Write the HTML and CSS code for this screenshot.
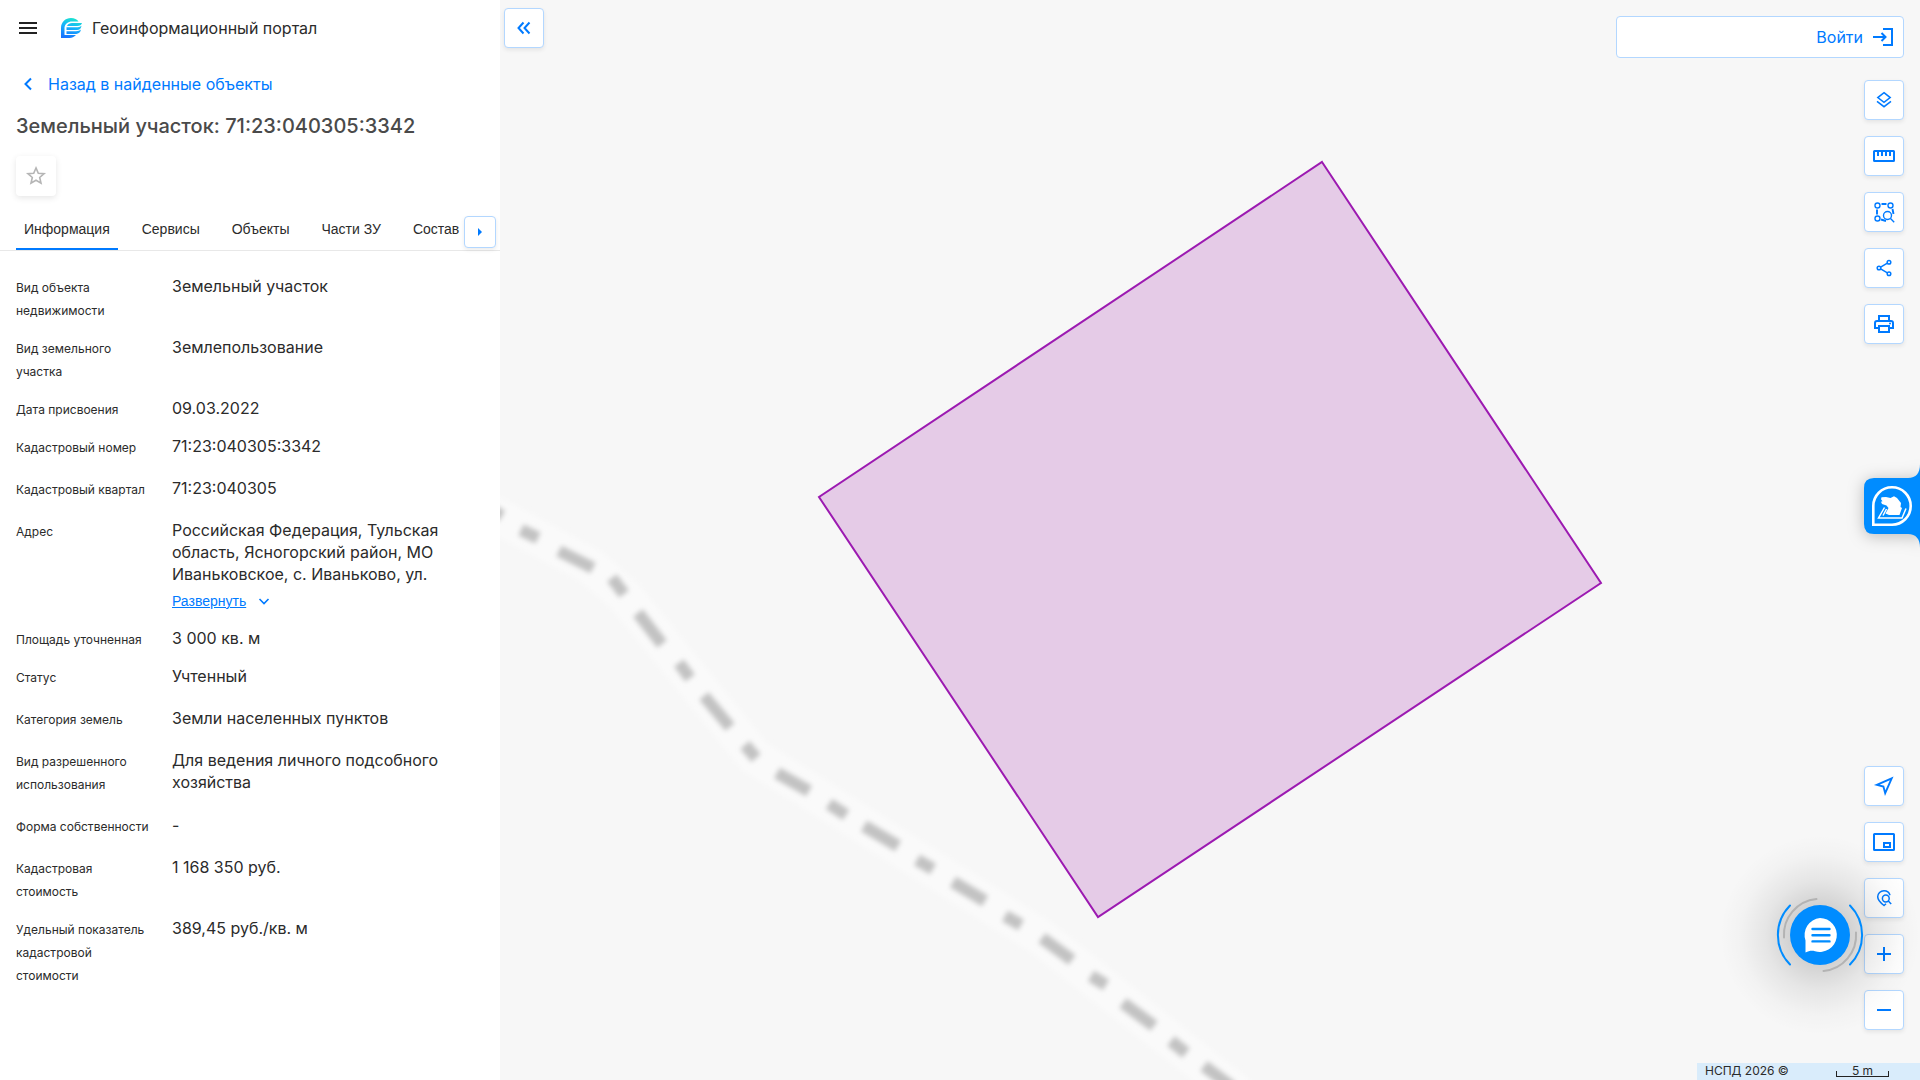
FILE: index.html
```html
<!DOCTYPE html>
<html lang="ru">
<head>
<meta charset="utf-8">
<meta name="viewport" content="width=device-width, initial-scale=1">
<title>Геоинформационный портал</title>
<link rel="stylesheet" href="styles.css">
</head>
<body>
<aside class="panel">
  <header class="topbar">
    <button class="icon-btn" aria-label="Меню">
      <svg width="24" height="24" viewBox="0 0 24 24"><path d="M3 6h18v2H3zM3 11h18v2H3zM3 16h18v2H3z" fill="#222"/></svg>
    </button>
    <a class="brand" href="#">
      <svg width="22" height="22" viewBox="0 0 22 22">
        <defs><linearGradient id="lg" gradientUnits="userSpaceOnUse" x1="14" y1="1" x2="8" y2="21"><stop offset="0" stop-color="#1be5cd"/><stop offset=".45" stop-color="#16b4fb"/><stop offset="1" stop-color="#1673ff"/></linearGradient></defs>
        <path d="M1 21V11C1 5 5.500 1 11 1c3.500 0 6 1.300 7.500 3.500H12C8 4.500 5 7 4.500 10.500V18H16c-2 2-4 3-6.500 3z" fill="url(#lg)"/>
        <path d="M7 9c1-2.300 3-3 5-3h10c-.5 2-2 3-5 3zM6.500 10.300H16c2.500 0 4-.5 5.500-1.500-.3 2.800-2 4.300-4.500 4.300H6.500zM6.500 14.200H16c2 0 3.600-.5 5-1.700-.6 2.900-2.400 4.400-4.800 4.400H6.500z" fill="url(#lg)"/>
      </svg>
      <span>Геоинформационный портал</span>
    </a>
  </header>

  <a class="back" href="#">
    <svg width="24" height="24" viewBox="0 0 24 24"><path d="M15 6.500 9.500 12l5.500 5.500" fill="none" stroke="#007aff" stroke-width="2"/></svg>
    <span>Назад в найденные объекты</span>
  </a>

  <h1 class="title">Земельный участок: 71:23:040305:3342</h1>

  <button class="fav" aria-label="В избранное">
    <svg width="24" height="24" viewBox="0 0 24 24"><path d="M12 3.900l2.300 5.300 5.800.5-4.400 3.800 1.300 5.700-5-3-5 3 1.300-5.700-4.400-3.800 5.800-.5z" fill="none" stroke="#b5b5b5" stroke-width="1.600"/></svg>
  </button>

  <nav class="tabs">
    <div class="tab-list">
      <a class="tab tab-active" href="#">Информация</a>
      <a class="tab" href="#">Сервисы</a>
      <a class="tab" href="#">Объекты</a>
      <a class="tab" href="#">Части ЗУ</a>
      <a class="tab" href="#">Состав</a>
    </div>
    <button class="tab-next" aria-label="Следующие вкладки">
      <svg width="24" height="24" viewBox="0 0 24 24"><path d="M10 8l4 4-4 4z" fill="#007aff"/></svg>
    </button>
  </nav>

  <dl class="info">
    <div class="row"><dt>Вид объекта недвижимости</dt><dd>Земельный участок</dd></div>
    <div class="row"><dt>Вид земельного участка</dt><dd>Землепользование</dd></div>
    <div class="row"><dt>Дата присвоения</dt><dd>09.03.2022</dd></div>
    <div class="row row-wide"><dt>Кадастровый номер</dt><dd>71:23:040305:3342</dd></div>
    <div class="row row-wide"><dt>Кадастровый квартал</dt><dd>71:23:040305</dd></div>
    <div class="row"><dt>Адрес</dt><dd>Российская Федерация, Тульская область, Ясногорский район, МО Иваньковское, с. Иваньково, ул.
      <button class="expand"><span>Развернуть</span>
        <svg width="20" height="20" viewBox="0 0 20 20"><path d="M5.500 8 10 12.500 14.500 8" fill="none" stroke="#007aff" stroke-width="1.600"/></svg>
      </button></dd></div>
    <div class="row"><dt>Площадь уточненная</dt><dd>3 000 кв. м</dd></div>
    <div class="row row-wide"><dt>Статус</dt><dd>Учтенный</dd></div>
    <div class="row row-wide"><dt>Категория земель</dt><dd>Земли населенных пунктов</dd></div>
    <div class="row row-wide"><dt>Вид разрешенного использования</dt><dd>Для ведения личного подсобного хозяйства</dd></div>
    <div class="row row-wide"><dt>Форма собственности</dt><dd>-</dd></div>
    <div class="row"><dt>Кадастровая стоимость</dt><dd>1 168 350 руб.</dd></div>
    <div class="row"><dt>Удельный показатель кадастровой стоимости</dt><dd>389,45 руб./кв. м</dd></div>
  </dl>
</aside>

<main class="map">
  <svg class="canvas" viewBox="500 0 1420 1080" preserveAspectRatio="xMidYMid slice">
    <defs><filter id="soft" filterUnits="userSpaceOnUse" x="480" y="480" width="800" height="640"><feGaussianBlur stdDeviation="2.500"/></filter></defs>
    <path d="M490 512 590 566 624 595 755 757 808 790 1042 938 1240 1095" fill="none" stroke="#fafafa" stroke-width="36" filter="url(#soft)"/>
    <path d="M488 508 502 516M521 530l17 8M559 551l34 17M612 578l12 16M638 613l24 31M679 663l11 15M704 696l26 31M745 745l11 13M777 773l32 18M829 804l17 11M864 826l34 20M917 860l16 9M953 882l32 19M1005 916l16 9M1042 938l30 22M1091 976l15 9M1123 1003l31 23M1171 1041l15 12M1204 1066l28 21" fill="none" stroke="#c2c2c2" stroke-width="12" filter="url(#soft)"/>
    <path d="M1322 162 1601 583 1098 917 819 497z" fill="#a220ac" fill-opacity=".2" stroke="#9c1ab1" stroke-width="2"/>
  </svg>

  <button class="tool collapse" aria-label="Свернуть панель">
    <svg width="24" height="24" viewBox="0 0 24 24"><path d="M11.500 6.500 6.500 12l5 5.500M17.500 6.500l-5 5.500 5 5.500" fill="none" stroke="#007aff" stroke-width="2"/></svg>
  </button>

  <div class="controls">
    <button class="login"><span>Войти</span>
      <svg width="24" height="24" viewBox="0 0 24 24"><path d="M12 4h9v16h-9M2 12h12M10.500 8l4 4-4 4" fill="none" stroke="#007aff" stroke-width="2"/></svg>
    </button>
    <div class="tool-group">
      <button class="tool" aria-label="Слои"><svg width="24" height="24" viewBox="0 0 24 24"><path d="M12 4.700l6.200 4.900L12 14.400 5.800 9.600zM5 13.400l7 5.300 7-5.300" fill="none" stroke="#007aff" stroke-width="1.500"/></svg></button>
      <button class="tool" aria-label="Измерения"><svg width="24" height="24" viewBox="0 0 24 24"><rect x="2" y="7" width="20" height="10" rx=".5" fill="none" stroke="#007aff" stroke-width="2"/><path d="M6 7v5M10 7v5M14 7v5M18 7v5" stroke="#007aff" stroke-width="2"/></svg></button>
      <button class="tool" aria-label="Поиск по области"><svg width="24" height="24" viewBox="0 0 24 24"><g fill="none" stroke="#007aff" stroke-width="1.400"><circle cx="5.500" cy="5.500" r="2.500"/><circle cx="18.500" cy="5.500" r="2.500"/><circle cx="5.500" cy="18.500" r="2.500"/><circle cx="15.500" cy="15.500" r="4"/><path d="M18.500 18.500l3.700 3.700"/></g><path d="M9.500 4h5M5 9.500v5M9 19.500l5 1.500M20.500 9l1 5" fill="none" stroke="#007aff" stroke-width="1.900"/></svg></button>
      <button class="tool" aria-label="Поделиться"><svg width="24" height="24" viewBox="0 0 24 24"><g fill="none" stroke="#007aff" stroke-width="1.500"><circle cx="7" cy="12" r="1.800"/><circle cx="17" cy="6.200" r="1.800"/><circle cx="17" cy="17.800" r="1.800"/><path d="M8.600 11.100l6.800-4M8.600 12.900l6.800 4"/></g></svg></button>
      <button class="tool" aria-label="Печать"><svg width="24" height="24" viewBox="0 0 24 24"><path d="M7 9V4h10v5M7 16H3v-5q0-2 2-2h14q2 0 2 2v5h-4M7 14h10v6H7z" fill="none" stroke="#007aff" stroke-width="2"/><circle cx="18" cy="11.500" r="1" fill="#007aff"/></svg></button>
    </div>
    <div class="tool-group tool-group-bottom">
      <button class="tool" aria-label="Моё местоположение"><svg width="24" height="24" viewBox="0 0 24 24"><path d="M4.800 10.800 19.700 4.300 13.200 19.200 11.400 12.600z" fill="none" stroke="#007aff" stroke-width="1.900"/></svg></button>
      <button class="tool" aria-label="Обзорная карта"><svg width="24" height="24" viewBox="0 0 24 24"><rect x="2" y="4" width="20" height="16" rx=".5" fill="none" stroke="#007aff" stroke-width="2"/><path d="M12 13h6v4h-6z" fill="none" stroke="#007aff" stroke-width="2"/></svg></button>
      <button class="tool" aria-label="Поиск места"><svg width="24" height="24" viewBox="0 0 24 24"><path d="M18 9.200C17.200 6.300 14.800 4.700 12 4.700c-3.500 0-6.300 2.700-6.300 6.100 0 3.600 3 6.200 6.300 8.700l2-1.700" fill="none" stroke="#007aff" stroke-width="1.500"/><circle cx="13.800" cy="12.500" r="3.400" fill="none" stroke="#007aff" stroke-width="1.500"/><path d="M16.300 15l2.900 3" stroke="#007aff" stroke-width="1.500"/></svg></button>
      <button class="tool" aria-label="Приблизить"><svg width="24" height="24" viewBox="0 0 24 24"><path d="M5 12h14M12 5v14" stroke="#007aff" stroke-width="2"/></svg></button>
      <button class="tool" aria-label="Отдалить"><svg width="24" height="24" viewBox="0 0 24 24"><path d="M5 12h14" stroke="#007aff" stroke-width="2"/></svg></button>
    </div>
  </div>

  <button class="side-tab" aria-label="Помощник">
    <svg width="56" height="84" viewBox="0 0 56 84">
      <path d="M56 0C56 9 52 14 44 14H10Q0 14 0 24V60Q0 70 10 70H44C52 70 56 75 56 84z" fill="#008cff"/>
      <path d="M9.300 60.700V42A18.700 18.700 0 1 1 28 60.700z" fill="none" stroke="#fff" stroke-width="2.600"/>
      <path d="M17.500 33.300l4.500-.3 4.500 1 3.500-1.700 3 1.700 4 5-.5 4 1.500 1-2.500 7H25l-3.500-1.500 3-5.500-2-2.500-4.500-1.500-1-2.200 1.500-.6-1.500-2z" fill="#fff"/>
      <path d="M20.500 43.500l-6 10.500h23.500l4-9.500M22.500 45l-3.500 6.500" fill="none" stroke="#fff" stroke-width="1.500"/>
    </svg>
  </button>

  <button class="chat" aria-label="Чат поддержки">
    <svg width="88" height="88" viewBox="0 0 88 88">
      <circle cx="44" cy="44" r="30" fill="#008cff"/>
      <path d="M44 27a17 17 0 1 1-5 33.300c-3-.9-6-.5-9.500 1.200V49.500A17 17 0 0 1 44 27z" fill="#fff"/>
      <path d="M36.500 38h17M36.500 44.200h17M36.500 50.400h17" stroke="#008cff" stroke-width="2.400" stroke-linecap="round"/>
      <path d="M14 14.500a42 42 0 0 0 0 59M74 14.500a42 42 0 0 1 0 59" fill="none" stroke="#008cff" stroke-width="2" stroke-linecap="round"/>
      <path d="M8 46.500A36 36 0 0 1 40.500 8M80 41.500A36 36 0 0 1 47.500 80" fill="none" stroke="#b3b3b3" stroke-width="2" stroke-linecap="round"/>
    </svg>
  </button>

  <footer class="credit"><span>НСПД 2026 ©</span><span class="scale">5 m</span></footer>
</main>
</body>
</html>
```
FILE: styles.css
```css
* { box-sizing: border-box; }
body {
  margin: 0;
  display: flex;
  min-height: 100vh;
  font-family: Inter, "Noto Sans", sans-serif;
  font-size: 16px;
  line-height: 22px;
  color: #2b2b2b;
  background: #f7f7f7;
}
button { font: inherit; padding: 0; border: 0; background: none; cursor: pointer; }
a { text-decoration: none; color: inherit; }
svg { display: block; }

.panel { flex: 0 0 500px; min-width: 0; background: #fff; }
.topbar { display: flex; align-items: center; gap: 20px; height: 56px; padding: 0 16px; }
.brand { display: flex; align-items: center; gap: 10px; }
.back { display: flex; align-items: center; gap: 8px; margin: 16px 16px 0; color: #007aff; }
.title { margin: 18px 16px 0; font-size: 20px; line-height: 24px; font-weight: 500; color: #4a4a4a; }
.fav {
  display: grid;
  place-items: center;
  width: 40px;
  height: 40px;
  margin: 18px 16px 0;
  border-radius: 4px;
  background: #fff;
  box-shadow: 0 2px 6px rgba(0, 0, 0, .1);
}

.tabs {
  display: flex;
  align-items: flex-end;
  gap: 4px;
  height: 43px;
  margin-top: 12px;
  padding: 0 4px 0 16px;
  border-bottom: 1px solid #e8e8e8;
}
.tab-list {
  display: flex;
  flex: 1;
  align-self: stretch;
  gap: 16px;
  min-width: 0;
  overflow: hidden;
  font-family: "Liberation Sans", sans-serif;
  font-size: 14px;
}
.tab { padding: 10px 8px 0; white-space: nowrap; }
.tab-active { border-bottom: 2px solid #007aff; }
.tab-next {
  display: grid;
  place-items: center;
  width: 32px;
  height: 32px;
  margin-bottom: 2px;
  border: 1px solid #b3d7ff;
  border-radius: 4px;
  background: #fff;
  box-shadow: 0 2px 4px rgba(0, 0, 0, .08);
}

.info { display: flex; flex-direction: column; margin: 0; padding: 24px 16px; }
.row { display: grid; grid-template-columns: 140px 1fr; column-gap: 16px; padding-bottom: 14px; }
.row-wide { padding-bottom: 18px; }
.row dt { padding-top: 1px; font-size: 12px; line-height: 23px; }
.row dd { margin: 0; padding-right: 40px; }
.expand {
  display: flex;
  align-items: center;
  gap: 8px;
  height: 24px;
  margin-top: 4px;
  font-family: "Liberation Sans", sans-serif;
  font-size: 14px;
  color: #007aff;
}
.expand span { text-decoration: underline; }

.map { position: relative; flex: 1; min-width: 0; overflow: hidden; }
.canvas { position: absolute; inset: 0; width: 100%; height: 100%; }
.tool {
  display: grid;
  place-items: center;
  width: 40px;
  height: 40px;
  border: 1px solid #b3d7ff;
  border-radius: 4px;
  background: #fff;
  box-shadow: 0 2px 4px rgba(0, 0, 0, .08);
}
.collapse { position: absolute; left: 4px; top: 8px; }
.controls {
  position: absolute;
  top: 16px;
  right: 16px;
  bottom: 50px;
  display: flex;
  flex-direction: column;
  align-items: flex-end;
  gap: 22px;
}
.login {
  display: flex;
  align-items: center;
  justify-content: flex-end;
  gap: 8px;
  width: 288px;
  height: 42px;
  padding: 0 8px;
  border: 1px solid #b3d7ff;
  border-radius: 4px;
  background: #fff;
  color: #007aff;
}
.tool-group { display: flex; flex-direction: column; gap: 16px; }
.tool-group-bottom { margin-top: auto; }

.side-tab { position: absolute; right: 0; top: 464px; filter: drop-shadow(0 2px 8px rgba(0, 0, 0, .25)); }
.chat { position: absolute; right: 56px; bottom: 101px; }
.chat::before {
  content: "";
  position: absolute;
  inset: -56px;
  border-radius: 50%;
  background: radial-gradient(circle closest-side, rgba(0, 0, 0, .15) 30%, rgba(0, 0, 0, .07) 55%, rgba(0, 0, 0, .02) 80%, transparent);
  pointer-events: none;
}
.chat svg { position: relative; }
.credit {
  position: absolute;
  right: 0;
  bottom: 0;
  display: flex;
  justify-content: space-between;
  width: 223px;
  height: 17px;
  padding: 0 31px 0 8px;
  font-size: 12px;
  line-height: 16px;
  background: #d9ecfb;
}
.scale { position: relative; width: 53px; text-align: center; }
.scale::after {
  content: "";
  position: absolute;
  inset: 8px 0 3px;
  border: 1px solid #222;
  border-top: 0;
}
```
